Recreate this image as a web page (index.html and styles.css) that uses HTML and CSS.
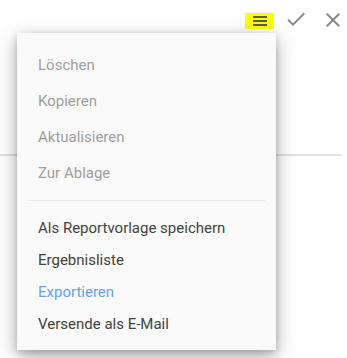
FILE: index.html
```html
<!DOCTYPE html>
<html lang="de">
<head>
    <meta charset="UTF-8">
    <meta name="viewport" content="width=device-width, initial-scale=1.0">
    <title>Report</title>
    <link rel="stylesheet" href="styles.css">
</head>
<body>
    <div class="toolbar">
        <span class="menu-toggle">
            <svg width="14" height="10" viewBox="0 0 14 10">
                <rect x="0" y="0" width="14" height="2" fill="#5f5f3a"/>
                <rect x="0" y="4" width="14" height="2" fill="#5f5f3a"/>
                <rect x="0" y="8" width="14" height="2" fill="#5f5f3a"/>
            </svg>
        </span>
        <svg class="tool-icon" width="24" height="24" viewBox="0 0 24 24">
            <path d="M9 16.17L4.83 12l-1.42 1.41L9 19 21 7l-1.41-1.41z" fill="#8a8a8a"/>
        </svg>
        <svg class="tool-icon close-icon" width="24" height="24" viewBox="0 0 24 24">
            <path d="M19 6.41L17.59 5 12 10.59 6.41 5 5 6.41 10.59 12 5 17.59 6.41 19 12 13.41 17.59 19 19 17.59 13.41 12z" fill="#8a8a8a"/>
        </svg>
    </div>
    <div class="sheet"></div>

    <div class="dropdown">
        <ul class="menu-group disabled">
            <li>Löschen</li>
            <li>Kopieren</li>
            <li>Aktualisieren</li>
            <li>Zur Ablage</li>
        </ul>
        <hr class="menu-divider">
        <ul class="menu-group actions">
            <li>Als Reportvorlage speichern</li>
            <li>Ergebnisliste</li>
            <li class="active">Exportieren</li>
            <li>Versende als E-Mail</li>
        </ul>
    </div>
</body>
</html>
```

FILE: styles.css
```css
body {
    margin: 0;
    background: #fff;
    font-family: Roboto, "Liberation Sans", sans-serif;
    position: relative;
    height: 358px;
    overflow: hidden;
}

.toolbar {
    display: flex;
    justify-content: flex-end;
    align-items: flex-start;
    padding: 7px 2px 0 0;
    height: 35px;
}

.menu-toggle {
    display: flex;
    align-items: center;
    justify-content: center;
    width: 29px;
    height: 16px;
    margin-top: 6px;
    margin-right: 10px;
    background: #ffff00;
}

.close-icon {
    margin-left: 13px;
    margin-top: 1px;
}

.sheet {
    margin-top: 112px;
    margin-right: 5px;
    border-top: 2px solid #e2e2e2;
}

.dropdown {
    position: absolute;
    top: 33px;
    left: 17px;
    width: 259px;
    height: 317px;
    box-sizing: border-box;
    padding: 14px 0 9px;
    background: #fafafa;
    box-shadow: 0 6px 18px rgba(0, 0, 0, 0.35), 0 2px 6px rgba(0, 0, 0, 0.15);
}

.menu-group {
    list-style: none;
    margin: 0;
    padding: 0;
}

.menu-group li {
    display: flex;
    align-items: center;
    padding-left: 21px;
    font-size: 15px;
    color: #424242;
}

.disabled li {
    height: 36px;
    color: #9e9e9e;
}

.actions li {
    height: 32px;
}

.actions li.active {
    color: #64a0ee;
}

.menu-divider {
    margin: 9px 11px 11px;
    border: none;
    border-top: 1px solid #e6e6e6;
}
```
